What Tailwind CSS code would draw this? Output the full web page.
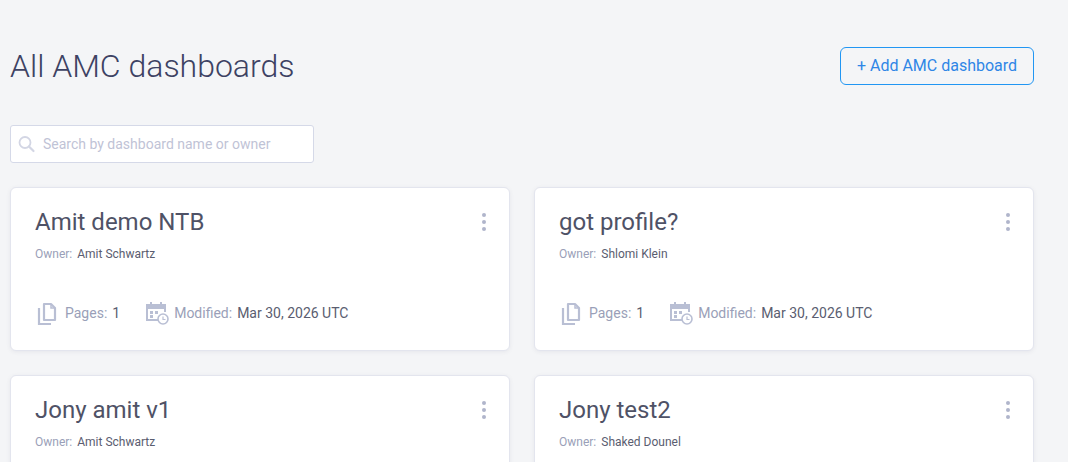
<!DOCTYPE html>
<html lang="en">
<head>
    <meta charset="UTF-8">
    <title>All AMC dashboards</title>
    <script src="https://cdn.jsdelivr.net/npm/@tailwindcss/browser@4"></script>
</head>
<body class="h-screen overflow-hidden bg-[#f4f5f7] font-['Roboto',sans-serif]">
    <div class="w-[1024px] ml-[10px] pt-[47px]">
        <!-- Header -->
        <div class="flex items-center justify-between h-[38px]">
            <h1 class="text-[32px] font-light text-[#3d4263]">All AMC dashboards</h1>
            <button class="w-[194px] h-[38px] border border-[#2196f3] rounded-md text-[16px] text-[#2f86e6]">+ Add AMC dashboard</button>
        </div>

        <!-- Search -->
        <div class="mt-[40px] w-[304px] h-[38px] flex items-center bg-white border border-[#d5d9e8] rounded-[3px] pl-[7px]">
            <svg class="w-[18px] h-[18px]" viewBox="0 0 18 18" fill="none" stroke="#d3d6e4" stroke-width="1.8"><circle cx="7" cy="7.5" r="5.5"/><path d="M11 11.5 L15.5 16" stroke-width="2.2" stroke-linecap="round"/></svg>
            <span class="ml-[7px] text-[14px] text-[#bfc3d6]">Search by dashboard name or owner</span>
        </div>

        <!-- Cards -->
        <div class="mt-[24px] grid grid-cols-2 gap-[24px]">
            <div class="relative h-[164px] bg-white rounded-md border border-[#e3e5ee] shadow-[0_1px_4px_rgba(60,66,99,0.08)] pl-[24px] pt-[19px]">
                <h2 class="text-[24px] leading-[30px] text-[#4f5266]">Amit demo NTB</h2>
                <div class="mt-[9px] flex text-[12px] leading-[16px]"><span class="text-[#9a9fb8] mr-[5px]">Owner:</span><span class="text-[#5a5d70]">Amit Schwartz</span></div>
                <div class="mt-[38px] flex items-center text-[14px] leading-[24px]">
                    <svg class="w-[22px] h-[24px] ml-[2px]" viewBox="0 0 22 24" fill="none" stroke="#b9bfd4" stroke-width="2.2"><path d="M2 7 V23 H14"/><path d="M7 3 H14 L18 7 V19 H7 Z" stroke-linejoin="round"/><path d="M14 3 V7 H18" stroke-width="1.5"/></svg>
                    <span class="ml-[6px] text-[#9a9fb8]">Pages:</span><span class="ml-[5px] text-[#5a5d70]">1</span>
                    <svg class="ml-[25px] w-[24px] h-[26px]" viewBox="0 0 24 26" fill="none"><path d="M16 20 H2 V5 H20 V12" stroke="#b9bfd4" stroke-width="2"/><path d="M2 5 H20 V9 H2 Z" fill="#b9bfd4"/><path d="M6 2 V5 M16 2 V5" stroke="#b9bfd4" stroke-width="2"/><rect x="5" y="11" width="3" height="3" fill="#b9bfd4"/><rect x="10" y="11" width="3" height="3" fill="#b9bfd4"/><rect x="5" y="15" width="3" height="3" fill="#b9bfd4"/><circle cx="18" cy="19" r="5" fill="#fff" stroke="#b9bfd4" stroke-width="1.6"/><path d="M18 16.5 V19.5 H20.5" stroke="#b9bfd4" stroke-width="1.2"/></svg>
                    <span class="ml-[5px] text-[#9a9fb8]">Modified:</span><span class="ml-[5px] text-[#5a5d70]">Mar 30, 2026 UTC</span>
                </div>
                <div class="absolute top-[25px] right-[23px] flex flex-col gap-[3px]"><i class="w-[4px] h-[4px] rounded-full bg-[#b0b5cb]"></i><i class="w-[4px] h-[4px] rounded-full bg-[#b0b5cb]"></i><i class="w-[4px] h-[4px] rounded-full bg-[#b0b5cb]"></i></div>
            </div>

            <div class="relative h-[164px] bg-white rounded-md border border-[#e3e5ee] shadow-[0_1px_4px_rgba(60,66,99,0.08)] pl-[24px] pt-[19px]">
                <h2 class="text-[24px] leading-[30px] text-[#4f5266]">got profile?</h2>
                <div class="mt-[9px] flex text-[12px] leading-[16px]"><span class="text-[#9a9fb8] mr-[5px]">Owner:</span><span class="text-[#5a5d70]">Shlomi Klein</span></div>
                <div class="mt-[38px] flex items-center text-[14px] leading-[24px]">
                    <svg class="w-[22px] h-[24px] ml-[2px]" viewBox="0 0 22 24" fill="none" stroke="#b9bfd4" stroke-width="2.2"><path d="M2 7 V23 H14"/><path d="M7 3 H14 L18 7 V19 H7 Z" stroke-linejoin="round"/><path d="M14 3 V7 H18" stroke-width="1.5"/></svg>
                    <span class="ml-[6px] text-[#9a9fb8]">Pages:</span><span class="ml-[5px] text-[#5a5d70]">1</span>
                    <svg class="ml-[25px] w-[24px] h-[26px]" viewBox="0 0 24 26" fill="none"><path d="M16 20 H2 V5 H20 V12" stroke="#b9bfd4" stroke-width="2"/><path d="M2 5 H20 V9 H2 Z" fill="#b9bfd4"/><path d="M6 2 V5 M16 2 V5" stroke="#b9bfd4" stroke-width="2"/><rect x="5" y="11" width="3" height="3" fill="#b9bfd4"/><rect x="10" y="11" width="3" height="3" fill="#b9bfd4"/><rect x="5" y="15" width="3" height="3" fill="#b9bfd4"/><circle cx="18" cy="19" r="5" fill="#fff" stroke="#b9bfd4" stroke-width="1.6"/><path d="M18 16.5 V19.5 H20.5" stroke="#b9bfd4" stroke-width="1.2"/></svg>
                    <span class="ml-[5px] text-[#9a9fb8]">Modified:</span><span class="ml-[5px] text-[#5a5d70]">Mar 30, 2026 UTC</span>
                </div>
                <div class="absolute top-[25px] right-[23px] flex flex-col gap-[3px]"><i class="w-[4px] h-[4px] rounded-full bg-[#b0b5cb]"></i><i class="w-[4px] h-[4px] rounded-full bg-[#b0b5cb]"></i><i class="w-[4px] h-[4px] rounded-full bg-[#b0b5cb]"></i></div>
            </div>

            <div class="relative h-[164px] bg-white rounded-md border border-[#e3e5ee] shadow-[0_1px_4px_rgba(60,66,99,0.08)] pl-[24px] pt-[19px]">
                <h2 class="text-[24px] leading-[30px] text-[#4f5266]">Jony amit v1</h2>
                <div class="mt-[9px] flex text-[12px] leading-[16px]"><span class="text-[#9a9fb8] mr-[5px]">Owner:</span><span class="text-[#5a5d70]">Amit Schwartz</span></div>
                <div class="absolute top-[25px] right-[23px] flex flex-col gap-[3px]"><i class="w-[4px] h-[4px] rounded-full bg-[#b0b5cb]"></i><i class="w-[4px] h-[4px] rounded-full bg-[#b0b5cb]"></i><i class="w-[4px] h-[4px] rounded-full bg-[#b0b5cb]"></i></div>
            </div>

            <div class="relative h-[164px] bg-white rounded-md border border-[#e3e5ee] shadow-[0_1px_4px_rgba(60,66,99,0.08)] pl-[24px] pt-[19px]">
                <h2 class="text-[24px] leading-[30px] text-[#4f5266]">Jony test2</h2>
                <div class="mt-[9px] flex text-[12px] leading-[16px]"><span class="text-[#9a9fb8] mr-[5px]">Owner:</span><span class="text-[#5a5d70]">Shaked Dounel</span></div>
                <div class="absolute top-[25px] right-[23px] flex flex-col gap-[3px]"><i class="w-[4px] h-[4px] rounded-full bg-[#b0b5cb]"></i><i class="w-[4px] h-[4px] rounded-full bg-[#b0b5cb]"></i><i class="w-[4px] h-[4px] rounded-full bg-[#b0b5cb]"></i></div>
            </div>
        </div>
    </div>
</body>
</html>
